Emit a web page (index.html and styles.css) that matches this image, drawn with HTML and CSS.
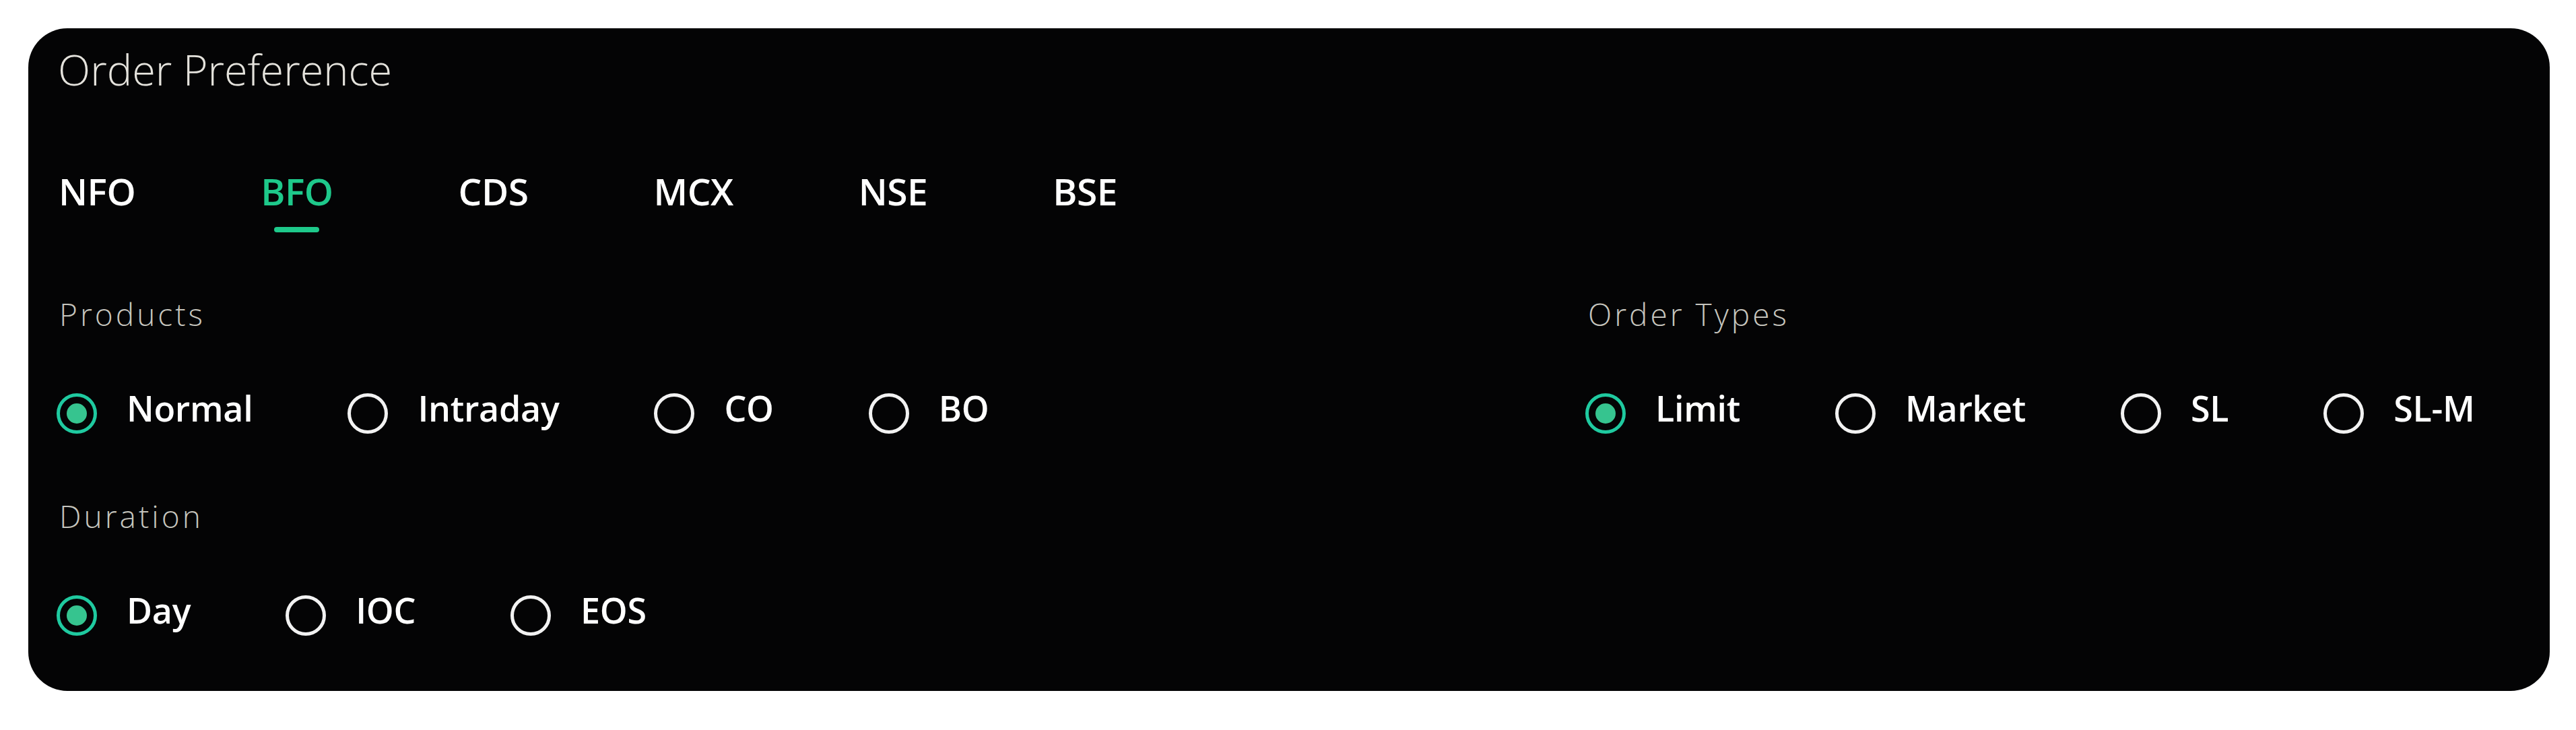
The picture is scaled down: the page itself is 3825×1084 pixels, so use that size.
FILE: index.html
```html
<!DOCTYPE html>
<html lang="en">
<head>
<meta charset="utf-8">
<title>Order Preference</title>
<link rel="stylesheet" href="styles.css">
</head>
<body>
<section class="card">
  <h1 class="title">Order Preference</h1>

  <nav class="tabs">
    <div class="tab"><span class="tab-text">NFO</span><span class="tab-bar"></span></div>
    <div class="tab active"><span class="tab-text">BFO</span><span class="tab-bar"></span></div>
    <div class="tab"><span class="tab-text">CDS</span><span class="tab-bar"></span></div>
    <div class="tab"><span class="tab-text">MCX</span><span class="tab-bar"></span></div>
    <div class="tab"><span class="tab-text">NSE</span><span class="tab-bar"></span></div>
    <div class="tab"><span class="tab-text">BSE</span><span class="tab-bar"></span></div>
  </nav>

  <div class="grid">
    <div class="col">
      <div class="group">
        <div class="label">Products</div>
        <div class="options">
          <div class="option checked"><span class="radio"></span><span class="opt-text">Normal</span></div>
          <div class="option"><span class="radio"></span><span class="opt-text">Intraday</span></div>
          <div class="option"><span class="radio"></span><span class="opt-text">CO</span></div>
          <div class="option"><span class="radio"></span><span class="opt-text">BO</span></div>
        </div>
      </div>
      <div class="group second">
        <div class="label">Duration</div>
        <div class="options">
          <div class="option checked"><span class="radio"></span><span class="opt-text">Day</span></div>
          <div class="option"><span class="radio"></span><span class="opt-text">IOC</span></div>
          <div class="option"><span class="radio"></span><span class="opt-text">EOS</span></div>
        </div>
      </div>
    </div>
    <div class="col">
      <div class="group">
        <div class="label">Order Types</div>
        <div class="options">
          <div class="option checked"><span class="radio"></span><span class="opt-text">Limit</span></div>
          <div class="option"><span class="radio"></span><span class="opt-text">Market</span></div>
          <div class="option"><span class="radio"></span><span class="opt-text">SL</span></div>
          <div class="option"><span class="radio"></span><span class="opt-text">SL-M</span></div>
        </div>
      </div>
    </div>
  </div>
</section>
</body>
</html>
```

FILE: styles.css
```css
* { box-sizing: border-box; }

html, body {
  margin: 0;
  padding: 0;
  background: #ffffff;
}

body {
  padding: 42px 39px 0 42px;
  font-family: "Open Sans", "Liberation Sans", sans-serif;
}

.card {
  background: #040405;
  border-radius: 58px;
  padding: 24px 42px 82px 42px;
  color: #ffffff;
  height: 984px;
}

.title {
  margin: 0;
  font-size: 63px;
  line-height: 74px;
  font-weight: 350;
  color: #e4e2dc;
  padding-left: 2px;
}

.tabs {
  display: flex;
  gap: 186px;
  margin-top: 111px;
  padding-left: 3px;
}

.tab {
  display: flex;
  flex-direction: column;
  align-items: center;
}

.tab-text {
  font-size: 55px;
  line-height: 66px;
  font-weight: 550;
  color: #ffffff;
  letter-spacing: -0.5px;
}

.tab-bar {
  width: 67px;
  height: 8px;
  border-radius: 4px;
  margin-top: 20px;
  background: transparent;
}

.tab.active .tab-text { color: #1ec98b; }
.tab.active .tab-bar { background: #1ec98b; }

.grid {
  display: grid;
  grid-template-columns: 2270px auto;
  margin-top: 94px;
}

.group.second { margin-top: 95px; }

.label {
  font-size: 46px;
  line-height: 54px;
  font-weight: 350;
  color: #c6c5be;
  letter-spacing: 4px;
  padding-left: 4px;
}

.options {
  display: flex;
  align-items: center;
  gap: 141px;
  margin-top: 91px;
}

.option {
  display: flex;
  align-items: flex-start;
  gap: 44px;
  height: 60px;
}

.radio {
  width: 60px;
  height: 60px;
  border-radius: 50%;
  border: 5px solid #f2f2f2;
  display: flex;
  align-items: center;
  justify-content: center;
  flex: none;
}

.option.checked .radio {
  border-color: #1fcaa0;
}

.option.checked .radio::after {
  content: "";
  width: 30px;
  height: 30px;
  border-radius: 50%;
  background: #36c48f;
}

.opt-text {
  font-size: 52px;
  line-height: 44px;
  font-weight: 550;
  color: #ffffff;
  letter-spacing: -0.3px;
}
```
